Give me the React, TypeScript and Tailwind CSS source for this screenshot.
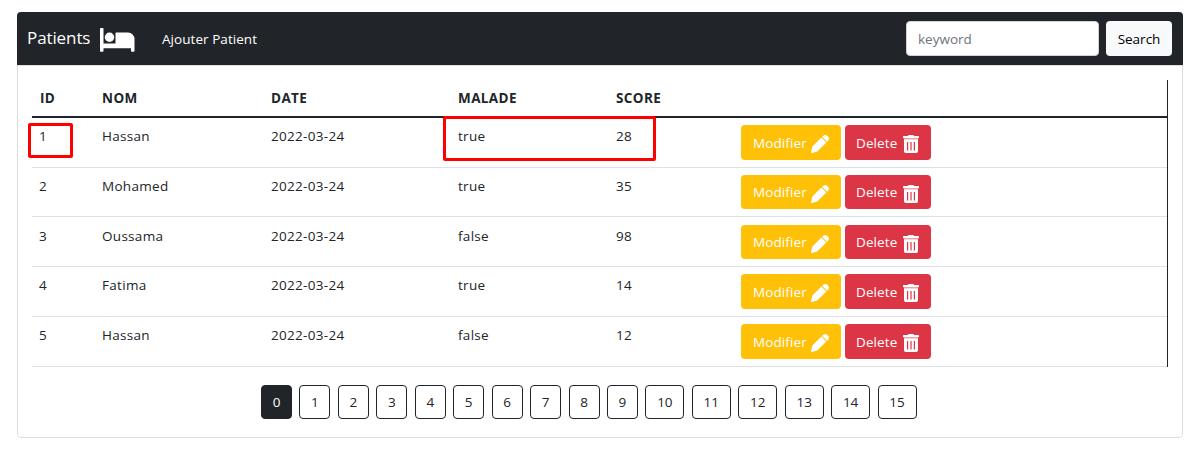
import React, { useState } from "react";

type Patient = { id: number; nom: string; date: string; malade: string; score: number; row: string; btn: string };

const patients: Patient[] = [
  { id: 1, nom: "Hassan", date: "2022-03-24", malade: "true", score: 28, row: "h-[50px]", btn: "h-[35px]" },
  { id: 2, nom: "Mohamed", date: "2022-03-24", malade: "true", score: 35, row: "h-[49px]", btn: "h-[34px]" },
  { id: 3, nom: "Oussama", date: "2022-03-24", malade: "false", score: 98, row: "h-[50px] pt-px", btn: "h-[34px]" },
  { id: 4, nom: "Fatima", date: "2022-03-24", malade: "true", score: 14, row: "h-[50px]", btn: "h-[35px]" },
  { id: 5, nom: "Hassan", date: "2022-03-24", malade: "false", score: 12, row: "h-[50px]", btn: "h-[35px]" },
];

const columns = "grid grid-cols-[63px_169px_187px_158px_125px_1fr]";
const pages = Array.from({ length: 16 }, (_, i) => i);

function BedIcon() {
  return (
    <svg className="ml-[10px] mt-[2px] h-[24px] w-[35px]" viewBox="0 0 35 24" fill="currentColor">
      <path d="M0 .8C0 .3.300 0 .8 0h1.900c.5 0 .8.300.8.8V15.500H15.500V5.500c0-.6.400-1 1-1H28a6.500 6.500 0 0 1 6.500 6.500v12c0 .5-.3.800-.8.800H31.800c-.5 0-.8-.3-.8-.8V20.200H3.500V23c0 .5-.3.800-.8.800H.8C.3 23.800 0 23.500 0 23Z" />
      <circle cx="9.500" cy="9.200" r="4.700" />
    </svg>
  );
}

function PencilIcon() {
  return (
    <svg className="mt-[3px] h-[18px] w-[18px] shrink-0" viewBox="0 0 18 18" fill="currentColor">
      <path d="M10.400 2.600 15.400 7.600 6.200 16.600 1.100 18C.4 18.200-.2 17.600 0 16.900l1.400-5.300Z" />
      <path d="m11.200 1.900.9-.9c1.300-1.300 3-1.300 4.300 0l.6.6c1.300 1.300 1.300 3 0 4.300l-.9.9Z" />
    </svg>
  );
}

function TrashIcon() {
  return (
    <svg className="mt-[3px] h-[18px] w-[16px] shrink-0" viewBox="0 0 16 18" fill="currentColor">
      <path d="M.6 1h4.200C5.100.4 5.600 0 6.200 0h3.600c.6 0 1.100.4 1.400 1h4.200c.4 0 .6.300.6.700v1c0 .4-.2.600-.6.600H.6C.2 3.300 0 3.100 0 2.700v-1C0 1.300.2 1 .6 1Z" />
      <path fillOpacity=".55" d="M1 3.300h14v1H1Z" />
      <path
        fillRule="evenodd"
        d="M1 4.300h14v11.900a1.800 1.800 0 0 1-1.800 1.800H2.800A1.800 1.800 0 0 1 1 16.200ZM4 7v8.500h1.200V7Zm3.400 0v8.500h1.200V7Zm3.400 0v8.500H12V7Z"
      />
    </svg>
  );
}

export default function App() {
  const [current, setCurrent] = useState(0);
  return (
    <div className="h-[464px] bg-white px-[17px] pt-3 font-['Open_Sans','Noto_Sans',sans-serif] text-[13.5px] text-[#212529]">
      <div className="h-[426px] rounded-[4px] border border-[#dfdfdf]">
        <nav className="-mx-px -mt-px flex h-[53px] items-center rounded-t-[4px] bg-[#212529] pl-[10px] pr-[11px] text-white">
          <a className="w-[63px] whitespace-nowrap pb-[2px] text-[17px] tracking-[-0.1px]">Patients</a>
          <BedIcon />
          <a className="ml-[27px] whitespace-nowrap pt-px tracking-[0.05px]">Ajouter Patient</a>
          <input
            placeholder="keyword"
            className="ml-auto h-[35px] w-[193px] rounded-[4px] border border-[#ced4da] bg-white px-[11px] text-[#212529] placeholder:text-[#6c757d]"
          />
          <button className="ml-[7px] h-[35px] w-[66px] rounded-[4px] bg-[#f8f9fa] pt-px text-black">Search</button>
        </nav>
        <div className="border-t border-[#dfdfdf] px-[14px] pt-[14px]">
          <div className="h-[287px] w-[1136px] border-r border-[#212529]">
            <div className={`${columns} h-[38px] border-b-2 border-[#212529] text-[13.5px] font-bold leading-[36px] tracking-[0.4px]`}>
              {["ID", "NOM", "DATE", "MALADE", "SCORE"].map((h) => (
                <div key={h} className="pl-[7px] first:pl-[8px]">{h}</div>
              ))}
            </div>
            {patients.map((p) => (
              <div key={p.id} className={`${columns} ${p.row} border-b border-[#dee2e6] tracking-[0.3px]`}>
                {[p.id, p.nom, p.date, p.malade, p.score].map((v, i) => (
                  <div key={i} className="relative pl-[7px] pt-[7px] leading-[22px]">
                    {v}
                    {p.id === 1 && i === 0 && (
                      <span className="absolute -left-[4px] top-[5px] h-[35px] w-[45px] rounded-[2px] border-3 border-[#ff0000]" />
                    )}
                    {p.id === 1 && i === 3 && (
                      <span className="absolute -left-[8px] -top-[2px] h-[45px] w-[213px] rounded-[2px] border-3 border-[#ff0000]" />
                    )}
                  </div>
                ))}
                <div className="flex gap-[4px] pl-[7px] pt-[7px] tracking-[0.1px] text-white">
                  <button className={`${p.btn} flex w-[100px] items-center justify-between rounded-[4px] bg-[#ffc107] pl-[12px] pr-[12px]`}>
                    <span className="pt-px">Modifier</span>
                    <PencilIcon />
                  </button>
                  <button className={`${p.btn} flex w-[86px] items-center justify-between rounded-[4px] bg-[#dc3545] pl-[11px] pr-[12px]`}>
                    <span className="pt-px">Delete</span>
                    <TrashIcon />
                  </button>
                </div>
              </div>
            ))}
          </div>
          <div className="flex gap-[7.45px] pl-[229px] pt-[18px]">
            {pages.map((n) => (
              <button
                key={n}
                onClick={() => setCurrent(n)}
                className={`h-[34px] shrink-0 rounded-[4px] border border-[#212529] ${n < 10 ? "w-[31px]" : "w-[39px]"} ${
                  n === current ? "bg-[#212529] text-white" : "bg-white text-[#212529]"
                }`}
              >
                {n}
              </button>
            ))}
          </div>
        </div>
      </div>
    </div>
  );
}
